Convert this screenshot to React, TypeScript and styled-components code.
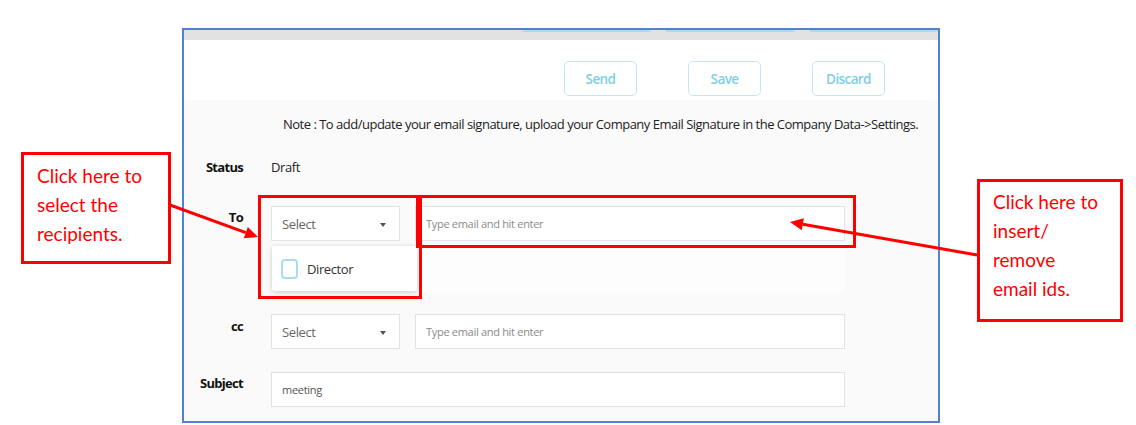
import * as React from "react";
import styled, { createGlobalStyle } from "styled-components";

const GlobalStyle = createGlobalStyle`
  html, body {
    margin: 0;
    padding: 0;
    background: #ffffff;
  }
  body {
    font-family: "Open Sans", "Liberation Sans", sans-serif;
  }
`;

const red = "#ff0000";
const uiFont = `"Open Sans", "Liberation Sans", sans-serif`;

const Page = styled.div`
  position: relative;
  width: 1136px;
  height: 425px;
  padding: 28px 0 0 182px;
  box-sizing: border-box;
  overflow: hidden;
`;

const Frame = styled.div`
  width: 758px;
  height: 395px;
  box-sizing: border-box;
  border: 2px solid #5480cf;
  display: flex;
  flex-direction: column;
  background: #fafafa;
`;

const TabStrip = styled.div`
  height: 10px;
  background: #e2e2e2;
  display: flex;
  gap: 14px;
  padding-left: 338px;
`;

const TabEdge = styled.div`
  width: 132px;
  height: 2px;
  background: #a9dcef;
  border-radius: 0 0 2px 2px;
`;

const Header = styled.div`
  height: 60px;
  background: #ffffff;
  display: flex;
  justify-content: flex-end;
  align-items: flex-start;
  gap: 51px;
  padding: 21px 53px 0 0;
  box-sizing: border-box;
`;

const ActionButton = styled.button`
  width: 73px;
  height: 35px;
  border: 1px solid #c4e7f2;
  border-radius: 5px;
  background: #ffffff;
  color: #7ccfe9;
  font-family: ${uiFont};
  font-size: 13.5px;
  font-weight: 600;
  letter-spacing: -0.6px;
  padding: 0;
`;

const Form = styled.div`
  flex: 1;
  padding-top: 14px;
  display: flex;
  flex-direction: column;
`;

const Note = styled.div`
  padding-left: 99px;
  line-height: 20px;
  font-size: 13px;
  letter-spacing: -0.5px;
  color: #222;
`;

const Row = styled.div<{ $top: number }>`
  display: flex;
  align-items: flex-start;
  margin-top: ${(p) => p.$top}px;
`;

const Label = styled.div<{ $pad?: number }>`
  width: 59px;
  margin-right: 28px;
  text-align: right;
  font-size: 13px;
  font-weight: 700;
  letter-spacing: -0.7px;
  line-height: 20px;
  color: #111;
  padding-top: ${(p) => p.$pad ?? 0}px;
`;

const Value = styled.div`
  font-size: 13px;
  letter-spacing: -0.4px;
  line-height: 20px;
  color: #222;
`;

const Fields = styled.div`
  display: flex;
  flex-direction: column;
`;

const FieldLine = styled.div`
  display: flex;
  gap: 15px;
`;

const SelectBox = styled.div`
  width: 129px;
  height: 35px;
  box-sizing: border-box;
  border: 1px solid #e2e2e2;
  background: #fff;
  display: flex;
  align-items: center;
  justify-content: space-between;
  padding: 0 13px 0 10px;
  font-size: 13px;
  letter-spacing: -0.4px;
  color: #666;
`;

const Caret = styled.span`
  width: 0;
  height: 0;
  border-left: 3.5px solid transparent;
  border-right: 3.5px solid transparent;
  border-top: 4px solid #555;
  margin-top: 2px;
`;

const TextBox = styled.div<{ $width: number; $filled?: boolean }>`
  width: ${(p) => p.$width}px;
  height: 35px;
  box-sizing: border-box;
  border: 1px solid #e2e2e2;
  background: #fff;
  display: flex;
  align-items: center;
  padding-left: 10px;
  font-size: 11px;
  letter-spacing: -0.3px;
  color: ${(p) => (p.$filled ? "#555" : "#8a8a8a")};
`;

const MenuArea = styled.div`
  margin-top: 5px;
  width: 574px;
  height: 46px;
  background: #fdfdfd;
`;

const Menu = styled.div`
  width: 145px;
  height: 45px;
  margin-left: 1px;
  box-sizing: border-box;
  background: #fff;
  border-radius: 3px;
  box-shadow: 0 1px 5px rgba(0, 0, 0, 0.22);
  display: flex;
  align-items: center;
  padding-left: 9px;
  gap: 9px;
  font-size: 13px;
  letter-spacing: -0.4px;
  color: #333;
`;

const Check = styled.span`
  width: 17px;
  height: 20px;
  box-sizing: border-box;
  border: 2px solid #a9dcf2;
  border-radius: 4px;
  background: #fff;
`;

const Callout = styled.div<{ $x: number; $y: number; $w: number; $h: number; $pt: number }>`
  position: absolute;
  left: ${(p) => p.$x}px;
  top: ${(p) => p.$y}px;
  width: ${(p) => p.$w}px;
  height: ${(p) => p.$h}px;
  box-sizing: border-box;
  border: 3px solid ${red};
  background: #fff;
  padding: ${(p) => p.$pt}px 0 0 13px;
  font-family: Lato, "Open Sans", sans-serif;
  font-size: 19px;
  line-height: 29px;
  color: ${red};
`;

const Highlight = styled.div<{ $x: number; $y: number; $w: number; $h: number }>`
  position: absolute;
  left: ${(p) => p.$x}px;
  top: ${(p) => p.$y}px;
  width: ${(p) => p.$w}px;
  height: ${(p) => p.$h}px;
  box-sizing: border-box;
  border: 3px solid ${red};
`;

const Arrows = styled.svg`
  position: absolute;
  left: 0;
  top: 0;
  pointer-events: none;
`;

const Arrow = ({ x1, y1, x2, y2 }: { x1: number; y1: number; x2: number; y2: number }) => {
  const a = Math.atan2(y2 - y1, x2 - x1);
  const len = 13;
  const half = 6;
  const bx = x2 - len * Math.cos(a);
  const by = y2 - len * Math.sin(a);
  const nx = -Math.sin(a) * half;
  const ny = Math.cos(a) * half;
  return (
    <g>
      <line x1={x1} y1={y1} x2={bx} y2={by} stroke={red} strokeWidth={3} />
      <polygon
        points={`${x2},${y2} ${bx + nx},${by + ny} ${bx - nx},${by - ny}`}
        fill={red}
      />
    </g>
  );
};

export default function App() {
  return (
    <>
      <GlobalStyle />
      <Page>
        <Frame>
          <TabStrip>
            <TabEdge />
            <TabEdge />
            <TabEdge />
          </TabStrip>
          <Header>
            <ActionButton>Send</ActionButton>
            <ActionButton>Save</ActionButton>
            <ActionButton>Discard</ActionButton>
          </Header>
          <Form>
            <Note>
              Note : To add/update your email signature, upload your Company Email Signature in the
              Company Data-&gt;Settings.
            </Note>
            <Row $top={23}>
              <Label>Status</Label>
              <Value>Draft</Value>
            </Row>
            <Row $top={29}>
              <Label $pad={1}>To</Label>
              <Fields>
                <FieldLine>
                  <SelectBox>
                    Select
                    <Caret />
                  </SelectBox>
                  <TextBox $width={430}>Type email and hit enter</TextBox>
                </FieldLine>
                <MenuArea>
                  <Menu>
                    <Check />
                    Director
                  </Menu>
                </MenuArea>
              </Fields>
            </Row>
            <Row $top={22}>
              <Label $pad={2}>cc</Label>
              <FieldLine>
                <SelectBox>
                  Select
                  <Caret />
                </SelectBox>
                <TextBox $width={430}>Type email and hit enter</TextBox>
              </FieldLine>
            </Row>
            <Row $top={23}>
              <Label $pad={1}>Subject</Label>
              <TextBox $width={574} $filled>
                meeting
              </TextBox>
            </Row>
          </Form>
        </Frame>

        <Highlight $x={258} $y={195} $w={164} $h={104} />
        <Highlight $x={416} $y={195} $w={440} $h={53} />

        <Callout $x={21} $y={152} $w={150} $h={112} $pt={6}>
          Click here to
          <br />
          select the
          <br />
          recipients.
        </Callout>
        <Callout $x={977} $y={179} $w={146} $h={143} $pt={5}>
          Click here to
          <br />
          insert/
          <br />
          remove
          <br />
          email ids.
        </Callout>

        <Arrows width={1136} height={425}>
          <Arrow x1={170} y1={205} x2={258} y2={237} />
          <Arrow x1={977} y1={255} x2={790} y2={222} />
        </Arrows>
      </Page>
    </>
  );
}
